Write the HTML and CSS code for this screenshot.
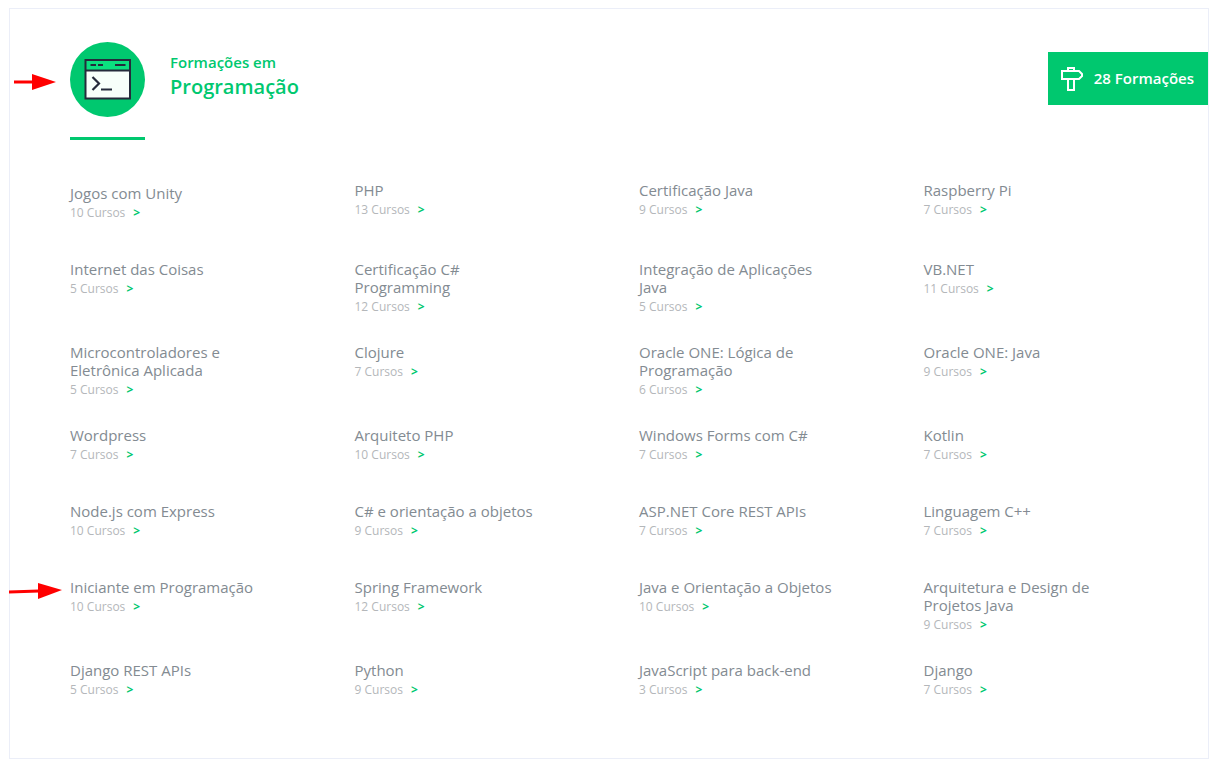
FILE: index.html
```html
<!DOCTYPE html>
<html lang="pt-BR">
<head>
<meta charset="utf-8">
<meta name="viewport" content="width=device-width, initial-scale=1">
<title>Formações em Programação</title>
<link rel="stylesheet" href="styles.css">
</head>
<body>
<main class="card">
  <header class="card-header">
    <div class="badge">
      <svg class="badge-icon" viewBox="0 0 75 75" aria-hidden="true">
        <circle cx="37.5" cy="37.5" r="37.5" fill="#00c86f"/>
        <rect x="15" y="18" width="45" height="39" fill="#f7fffa"/>
        <rect x="15" y="18" width="45" height="10" fill="#0be07f"/>
        <path d="M15.500 18H60V56.500H15.500ZM15.500 28.500H60M20.500 23H26M28 23H33M45 23H55.500" fill="none" stroke="#252b3b" stroke-width="2"/>
        <path d="M22.500 35L29 41.500L22.500 48M31 47.500H42" fill="none" stroke="#252b3b" stroke-width="2.200"/>
      </svg>
    </div>
    <h1 class="heading"><span class="heading-kicker">Formações em</span> <span class="heading-name">Programação</span></h1>
    <a class="total" href="#cursos">
      <svg class="total-icon" viewBox="0 0 24 26" fill="none" stroke="#fff" stroke-width="2" aria-hidden="true">
        <path d="M2 5H19L22 8V10L19 13H2ZM8 5V2H14V5M8 13V24H14V13"/>
      </svg>
      <span class="total-label">28 Formações</span>
    </a>
  </header>
  <ul class="courses" id="cursos">
    <li class="course course-first"><a href="#">Jogos com Unity</a><p>10 Cursos<b>&gt;</b></p></li>
    <li class="course"><a href="#">PHP</a><p>13 Cursos<b>&gt;</b></p></li>
    <li class="course"><a href="#">Certificação Java</a><p>9 Cursos<b>&gt;</b></p></li>
    <li class="course"><a href="#">Raspberry Pi</a><p>7 Cursos<b>&gt;</b></p></li>
    <li class="course"><a href="#">Internet das Coisas</a><p>5 Cursos<b>&gt;</b></p></li>
    <li class="course"><a href="#">Certificação C# Programming</a><p>12 Cursos<b>&gt;</b></p></li>
    <li class="course"><a href="#">Integração de Aplicações Java</a><p>5 Cursos<b>&gt;</b></p></li>
    <li class="course"><a href="#">VB.NET</a><p>11 Cursos<b>&gt;</b></p></li>
    <li class="course"><a href="#">Microcontroladores e Eletrônica Aplicada</a><p>5 Cursos<b>&gt;</b></p></li>
    <li class="course"><a href="#">Clojure</a><p>7 Cursos<b>&gt;</b></p></li>
    <li class="course"><a href="#">Oracle ONE: Lógica de Programação</a><p>6 Cursos<b>&gt;</b></p></li>
    <li class="course"><a href="#">Oracle ONE: Java</a><p>9 Cursos<b>&gt;</b></p></li>
    <li class="course"><a href="#">Wordpress</a><p>7 Cursos<b>&gt;</b></p></li>
    <li class="course"><a href="#">Arquiteto PHP</a><p>10 Cursos<b>&gt;</b></p></li>
    <li class="course"><a href="#">Windows Forms com C#</a><p>7 Cursos<b>&gt;</b></p></li>
    <li class="course"><a href="#">Kotlin</a><p>7 Cursos<b>&gt;</b></p></li>
    <li class="course"><a href="#">Node.js com Express</a><p>10 Cursos<b>&gt;</b></p></li>
    <li class="course"><a href="#">C# e orientação a objetos</a><p>9 Cursos<b>&gt;</b></p></li>
    <li class="course"><a href="#">ASP.NET Core REST APIs</a><p>7 Cursos<b>&gt;</b></p></li>
    <li class="course"><a href="#">Linguagem C++</a><p>7 Cursos<b>&gt;</b></p></li>
    <li class="course"><svg class="arrow arrow-course" viewBox="0 0 53 16" aria-hidden="true"><path d="M0 9L30 8" stroke="red" stroke-width="3"/><path d="M29 0L53 7L29 16Z" fill="red"/></svg><a href="#">Iniciante em Programação</a><p>10 Cursos<b>&gt;</b></p></li>
    <li class="course"><a href="#">Spring Framework</a><p>12 Cursos<b>&gt;</b></p></li>
    <li class="course"><a href="#">Java e Orientação a Objetos</a><p>10 Cursos<b>&gt;</b></p></li>
    <li class="course"><a href="#">Arquitetura e Design de Projetos Java</a><p>9 Cursos<b>&gt;</b></p></li>
    <li class="course"><a href="#">Django REST APIs</a><p>5 Cursos<b>&gt;</b></p></li>
    <li class="course"><a href="#">Python</a><p>9 Cursos<b>&gt;</b></p></li>
    <li class="course"><a href="#">JavaScript para back-end</a><p>3 Cursos<b>&gt;</b></p></li>
    <li class="course"><a href="#">Django</a><p>7 Cursos<b>&gt;</b></p></li>
  </ul>
  <svg class="arrow arrow-header" viewBox="0 0 42 16" aria-hidden="true"><path d="M0 8H20" stroke="red" stroke-width="3"/><path d="M18 0L42 8L18 16Z" fill="red"/></svg>
</main>
</body>
</html>
```

FILE: styles.css
```css
* {
  box-sizing: border-box;
}

body {
  margin: 8px 9px;
  background: #fff;
  font-family: "Open Sans", "Noto Sans", sans-serif;
}

.card {
  position: relative;
  padding: 33px 0 49px 60px;
  border: 1px solid #ebeef8;
  background: #fff;
  box-shadow: 0 5px 25px #edf1f9;
}

.card-header {
  display: flex;
  align-items: flex-start;
}

.badge {
  width: 75px;
  padding-bottom: 20px;
  border-bottom: 3px solid #00c86f;
}

.badge-icon {
  display: block;
  width: 75px;
  height: 75px;
}

.heading {
  display: flex;
  flex-direction: column;
  margin: 10px 0 0 25px;
  color: #00c86f;
  font-weight: 600;
}

.heading-kicker {
  font-size: 15px;
  line-height: 20px;
}

.heading-name {
  font-size: 20px;
  line-height: 30px;
}

.total {
  display: flex;
  align-items: center;
  gap: 10px;
  height: 53px;
  margin: 10px 0 0 auto;
  padding: 0 14px 0 12px;
  background: #00c86f;
  color: #fff;
  font-size: 15px;
  font-weight: 600;
  line-height: 20px;
  text-decoration: none;
}

.total-label {
  padding-bottom: 1px;
}

.total-icon {
  width: 24px;
  height: 26px;
}

.courses {
  display: grid;
  grid-template-columns: repeat(4, 1fr);
  align-items: start;
  row-gap: 28px;
  margin: 41px 0 0;
  padding: 0;
  list-style: none;
}

.course {
  position: relative;
  min-height: 48px;
}

.course-first {
  margin-top: 3px;
}

.course a {
  display: block;
  max-width: 70%;
  color: #838b92;
  font-size: 15px;
  line-height: 18px;
  text-decoration: none;
}

.course p {
  margin: 3px 0 0;
  color: #b4b7ba;
  font-size: 12px;
  line-height: 16px;
}

.course b {
  margin-left: 8px;
  color: #00c86f;
}

/* Callout arrows over the card */
.arrow {
  position: absolute;
  height: 16px;
}

.arrow-header {
  top: 65px;
  left: 4px;
  width: 42px;
}

.arrow-course {
  top: 5px;
  left: -61px;
  width: 53px;
}
```
